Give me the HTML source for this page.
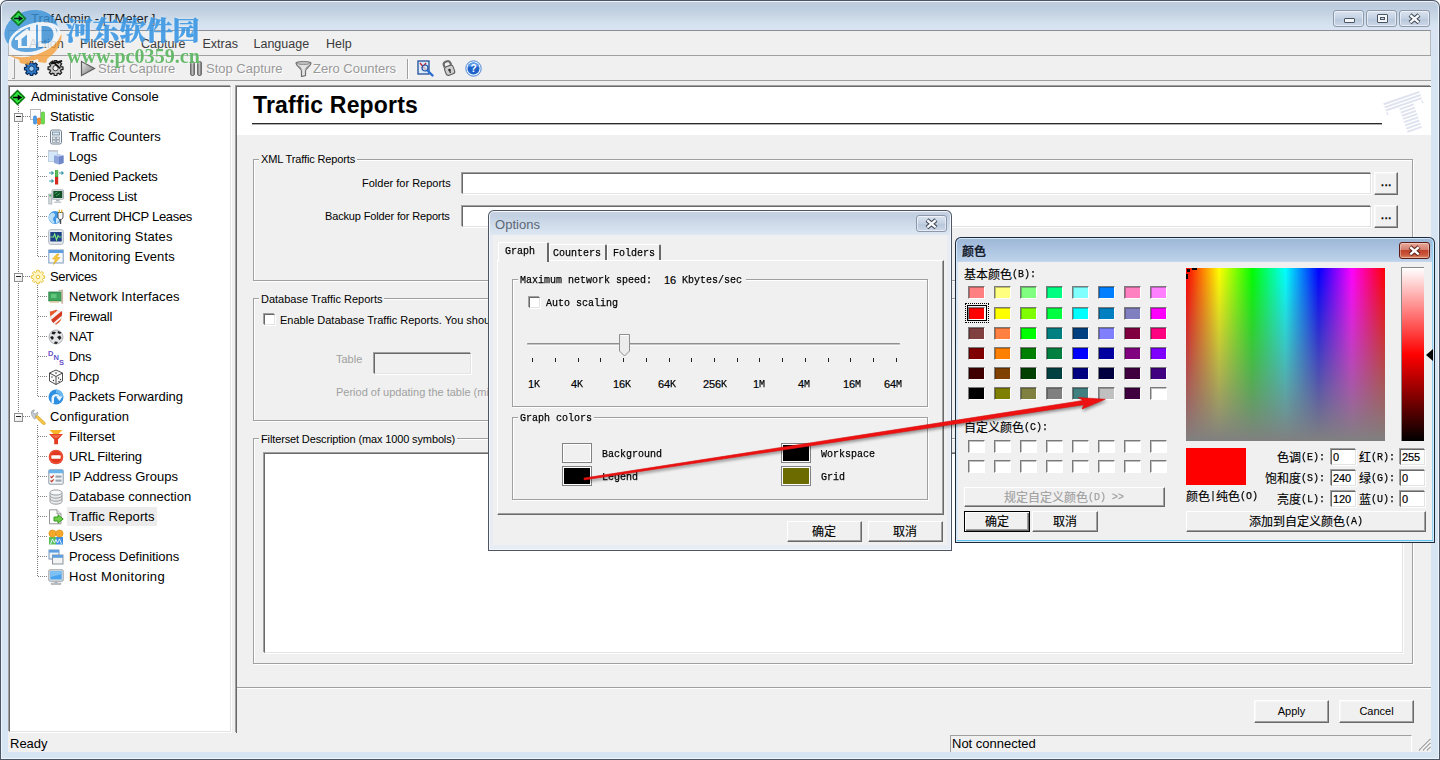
<!DOCTYPE html>
<html><head><meta charset="utf-8"><title>TrafAdmin</title>
<style>
*{box-sizing:border-box;margin:0;padding:0}
html,body{width:1440px;height:760px;overflow:hidden;background:#fff}
body{font-family:"Liberation Sans",sans-serif;font-size:12px;color:#000;position:relative}
div,span,b,i,svg{position:absolute}
span,b{white-space:pre}
#win{left:0;top:0;width:1440px;height:760px;background:linear-gradient(#c3ccd9 0,#bccde0 7px,#c8d5e4 15px,#d3e1ee 23px,#d9e3f3 29px,#d7e4f2 60px,#d7e4f2 100%);border-radius:7px 7px 0 0;box-shadow:inset 0 0 0 1px #4b5566,inset 0 0 0 2px #eef4fb}
#title{left:31px;top:11px;font-size:13px;color:#1a1a1a;letter-spacing:.07px}
#menubar{left:8px;top:30px;width:1423px;height:25px;background:#f0f0f0;border-top:1px solid #8c8f94;border-left:1px solid #b5b8bd;border-right:1px solid #b5b8bd}
#menubar span{top:6px;font-size:12.500px;color:#3a3a3a}
#toolbar{left:8px;top:55px;width:1423px;height:26px;background:#f0f0f0;border-top:1px solid #a0a0a0;border-bottom:1px solid #a0a0a0}
#toolbar .t{top:5px;font-size:13px;color:#999;text-shadow:1px 1px 0 #fff}
#client{left:8px;top:81px;width:1423px;height:671px;background:#f0f0f0}
#tree{left:9px;top:86px;width:222px;height:646px;background:#fff;border:1px solid #e3e3e3;border-top:1px solid #696969;border-left:1px solid #696969;box-shadow:-1px -1px 0 #a0a0a0,1px 1px 0 #fff}
.ti{height:20px;font-size:13px;line-height:22px;color:#000}
#main{left:236px;top:86px;width:1195px;height:647px;background:#f0f0f0;border-top:1px solid #696969;border-left:1px solid #696969;box-shadow:-1px -1px 0 #a0a0a0}
#hdr{left:237px;top:87px;width:1194px;height:48px;background:#fff}
#h1{left:253px;top:92px;font-size:23px;font-weight:bold;line-height:26px;letter-spacing:.18px}
#ul{left:252px;top:123px;width:1130px;height:2px;background:linear-gradient(#2a2a2a 0,#2a2a2a 1px,#b0b0b0 1px,#b0b0b0 2px)}
.gb{border:1px solid #a0a0a0;box-shadow:inset 1px 1px 0 #fff,1px 1px 0 #fff}
.gl{background:#f0f0f0;padding:0 2px;font-size:11px;line-height:14px}
.lbl{font-size:11px;line-height:14px}
.inp{background:#fff;border:1px solid #e3e3e3;border-top:1px solid #696969;border-left:1px solid #696969;box-shadow:-1px -1px 0 #a0a0a0,1px 1px 0 #fff}
.btn{background:#f0f0f0;border:1px solid;border-color:#fff #696969 #696969 #fff;box-shadow:inset -1px -1px 0 #a0a0a0,inset 1px 1px 0 #f7f7f7;text-align:center;font-size:11px}
.btn span{left:0;right:0;text-align:center}
#status{left:8px;top:733px;width:1423px;height:19px;background:#f0f0f0;font-size:13px}
.cb{width:11px;height:11px;background:#fff;border:1px solid #e3e3e3;border-top:1px solid #696969;border-left:1px solid #696969;box-shadow:-1px -1px 0 #a0a0a0,1px 1px 0 #fff}

.cj{font-family:"Liberation Mono","Noto Sans CJK SC",sans-serif;font-size:12px;line-height:12px;-webkit-text-stroke:.15px currentColor}
.mo{font-family:"Liberation Mono",monospace;font-size:11.500px;line-height:12px;-webkit-text-stroke:.25px currentColor;transform:scaleX(.8696);transform-origin:0 0}
.dg{font-family:"Liberation Sans",sans-serif;font-size:11px;line-height:12px;letter-spacing:-.12px;-webkit-text-stroke:.2px currentColor}
.dlg{border-radius:6px 6px 0 0;background:linear-gradient(#c9d3e1 0,#c2d0e2 6px,#d0dcea 15px,#dce6f3 24px,#e8edf5 26px);box-shadow:inset 0 0 0 1px #4e5663,inset 0 0 0 2px #f2f6fb}
.dlg.act{background:linear-gradient(#9ab5d6 0,#a9c1df 10px,#bdd2ea 24px,#d9e7f5 26px,#dcecf9 100%);box-shadow:inset 0 0 0 1px #1d2a3a,inset 0 0 0 2px #d4e6f7,inset 0 -3px 0 0 #5cc3ee,inset -3px 0 0 0 #8fd2f2}
.dlgbody{background:#f0f0f0}
.capbtn{border:1px solid #8d99aa;border-radius:3px;background:linear-gradient(#dbe4f0,#c3d0e2 50%,#b7c6db 51%,#cbd7e7);box-shadow:inset 0 0 0 1px rgba(255,255,255,.55)}
.capbtn.red{border-color:#5a1c14;background:linear-gradient(#e9a99b,#d4806f 45%,#c1422a 50%,#c95a3c 80%,#e08c6a);box-shadow:inset 0 0 0 1px rgba(255,255,255,.35)}
.pane{background:#f0f0f0;border:1px solid;border-color:#fff #696969 #696969 #fff;box-shadow:inset -1px -1px 0 #a0a0a0}
.tab{background:#f0f0f0;border-top:1px solid #fff;border-left:1px solid #fff;border-right:2px solid #696969;border-radius:2px 2px 0 0}
.tab.act{border-right:2px solid #696969}
.btn2{background:#f0f0f0;border:1px solid;border-color:#fff #696969 #696969 #fff;box-shadow:inset -1px -1px 0 #a0a0a0}
.btn2.def{border:1px solid #000;box-shadow:inset 1px 1px 0 #fff,inset -1px -1px 0 #696969,inset -2px -2px 0 #a0a0a0}
.sw{width:30px;height:20px;border:1px solid #828282;box-shadow:inset 0 0 0 1px #fff}
.cs{width:17px;height:13px;border:1px solid;border-color:#7a7a7a #fff #fff #7a7a7a;box-shadow:inset 1px 1px 0 rgba(0,0,0,.25)}
.inp2{background:#fff;border:1px solid #e3e3e3;border-top:1px solid #696969;border-left:1px solid #696969;box-shadow:-1px -1px 0 #a0a0a0,1px 1px 0 #fff}
</style></head><body>
<div id="win"></div>
<span id="title">TrafAdmin - [TMeter ]</span>
<div id="menubar"><span style="left:20px">Action</span><span style="left:71px">Filterset</span><span style="left:132px">Capture</span><span style="left:193.500px">Extras</span><span style="left:244.500px">Language</span><span style="left:317px">Help</span></div>
<div id="toolbar"><span class="t" style="left:90px">Start Capture</span><span class="t" style="left:198px">Stop Capture</span><span class="t" style="left:305px">Zero Counters</span></div>
<div id="client"></div>
<div id="tree"></div>
<!--TREE-->
<div style="left:18px;top:105px;width:1px;height:312px;background-image:linear-gradient(to bottom,#808080 1px,transparent 1px);background-size:1px 2px"></div>
<div style="left:37px;top:125px;width:1px;height:132px;background-image:linear-gradient(to bottom,#808080 1px,transparent 1px);background-size:1px 2px"></div>
<div style="left:37px;top:285px;width:1px;height:112px;background-image:linear-gradient(to bottom,#808080 1px,transparent 1px);background-size:1px 2px"></div>
<div style="left:37px;top:425px;width:1px;height:152px;background-image:linear-gradient(to bottom,#808080 1px,transparent 1px);background-size:1px 2px"></div>
<svg style="left:9px;top:88.5px" width="17" height="17" viewBox="0 0 16 16"><path d="M8 .5 15.5 8 8 15.5 .5 8Z" fill="#0b7a12"/><path d="M8 2.2 13.8 8 8 13.8 2.2 8Z" fill="#2ee53a" stroke="#064d0a" stroke-width=".8" stroke-dasharray="1.2 .8"/><path d="M3.8 7.2h4.4V5.2L12.4 8 8.2 10.8V8.8H3.8Z" fill="#000"/></svg>
<span class="ti" style="left:31px;top:86px;letter-spacing:-0.05px">Administative Console</span>
<div style="left:23px;top:116px;width:7px;height:1px;background-image:linear-gradient(to right,#808080 1px,transparent 1px);background-size:2px 1px"></div>
<div style="left:14px;top:112.5px;width:9px;height:9px;border:1px solid #919191;background:linear-gradient(135deg,#fff,#e8e8e8)"></div><div style="left:16px;top:116px;width:5px;height:1px;background:#222"></div>
<svg style="left:30px;top:109px" width="16" height="16" viewBox="0 0 16 16"><rect x=".5" y=".5" width="10" height="10" fill="#fdfdfd" stroke="#b9b9b9"/><rect x="3.5" y="7" width="3" height="8" rx="1" fill="#4a9be8" stroke="#2f7fd0" stroke-width=".6"/><rect x="7.5" y="9" width="3" height="6.5" rx="1" fill="#f08a2e" stroke="#d86c12" stroke-width=".6"/><rect x="11.3" y="3" width="3.2" height="12" rx="1" fill="#6fdc4a" stroke="#48b626" stroke-width=".6"/></svg>
<span class="ti" style="left:50px;top:106px;letter-spacing:-0.15px">Statistic</span>
<div style="left:38px;top:136px;width:10px;height:1px;background-image:linear-gradient(to right,#808080 1px,transparent 1px);background-size:2px 1px"></div>
<svg style="left:48px;top:129px" width="16" height="16" viewBox="0 0 16 16"><rect x="2.5" y="1" width="11" height="14" rx="1.8" fill="#f4f7fa" stroke="#71808f"/><rect x="4.5" y="3" width="7" height="3" fill="#cfe6f7" stroke="#71808f" stroke-width=".8"/><rect x="4.5" y="8" width="3" height="2.4" fill="#e4e9ee" stroke="#8795a3" stroke-width=".7"/><rect x="8.5" y="8" width="3" height="2.4" fill="#e4e9ee" stroke="#8795a3" stroke-width=".7"/><rect x="4.5" y="11" width="3" height="2.4" fill="#e4e9ee" stroke="#8795a3" stroke-width=".7"/><rect x="8.5" y="11" width="3" height="2.4" fill="#e4e9ee" stroke="#8795a3" stroke-width=".7"/></svg>
<span class="ti" style="left:69px;top:126px">Traffic Counters</span>
<div style="left:38px;top:156px;width:10px;height:1px;background-image:linear-gradient(to right,#808080 1px,transparent 1px);background-size:2px 1px"></div>
<svg style="left:48px;top:149px" width="16" height="16" viewBox="0 0 16 16"><rect x=".5" y="1.5" width="9" height="11" fill="#d3e8f8" stroke="#b8c9d9" stroke-width=".8"/><rect x=".5" y="1.2" width="9" height="1.6" fill="#c5c8d2"/><path d="M6 6.5l5 -1.2 4.5 1.2v7.5l-4.5 1.5-5-1.5Z" fill="#8ea6dc"/><path d="M11 7v8.5l4.5-1.5V6.5Z" fill="#6f86c8"/><path d="M6 6.5l5-1.2 4.5 1.2-4.5 1Z" fill="#c5d4f2"/></svg>
<span class="ti" style="left:69px;top:146px">Logs</span>
<div style="left:38px;top:176px;width:10px;height:1px;background-image:linear-gradient(to right,#808080 1px,transparent 1px);background-size:2px 1px"></div>
<svg style="left:48px;top:169px" width="16" height="16" viewBox="0 0 16 16"><rect x="7" y="1" width="3.2" height="7" fill="#3faa3c"/><rect x="7" y="8" width="3.2" height="7.5" fill="#d42a22"/><path d="M7.6 2h2M7.6 4h2M7.6 6h2" stroke="#9be08f" stroke-width=".8"/><path d="M1 4h4M3.5 2.3 5.3 4 3.5 5.7M1 12h4M3.5 10.3 5.3 12 3.5 13.7M11 4h4M13.5 2.3 15.3 4 13.5 5.7" fill="none" stroke="#3a98a8" stroke-width="1.1"/></svg>
<span class="ti" style="left:69px;top:166px;letter-spacing:-0.17px">Denied Packets</span>
<div style="left:38px;top:196px;width:10px;height:1px;background-image:linear-gradient(to right,#808080 1px,transparent 1px);background-size:2px 1px"></div>
<svg style="left:48px;top:189px" width="16" height="16" viewBox="0 0 16 16"><rect x="4" y=".8" width="11.5" height="9.5" rx="1" fill="#dfe3e6" stroke="#9aa3aa" stroke-width=".8"/><rect x="5.3" y="2" width="9" height="7" fill="#14502a"/><path d="M6.5 4.5l3-1.5M8 7l4-2.5" stroke="#3fc16a" stroke-width=".8"/><rect x="8" y="10.5" width="3.5" height="2" fill="#b0b7bd"/><rect x="6" y="12.5" width="7.5" height="1.5" fill="#c9ced2"/><rect x=".8" y="5" width="3" height="10" fill="#d7dcdf" stroke="#9aa3aa" stroke-width=".7"/><rect x="1.4" y="6" width="1.8" height="1.4" fill="#36b34a"/></svg>
<span class="ti" style="left:69px;top:186px;letter-spacing:-0.25px">Process List</span>
<div style="left:38px;top:216px;width:10px;height:1px;background-image:linear-gradient(to right,#808080 1px,transparent 1px);background-size:2px 1px"></div>
<svg style="left:48px;top:209px" width="16" height="16" viewBox="0 0 16 16"><circle cx="7" cy="8.5" r="6.5" fill="#3f97e6"/><path d="M3 4.5c2-1 4-.5 4 1.5s-2 2-2 4 2 2 1.5 4.5C3 14 .8 11 .8 8.500c0-1.500.8-3 2.200-4Z" fill="#b9dcf7"/><path d="M8 9.500c1.500-1 3.500 0 3 2s-2 2.500-3 3Z" fill="#c9e6fb"/><path d="M10 3.500h5v4.500c0 1.500-1 2.500-2.500 2.500S10 9.500 10 8Z" fill="#fafafa" stroke="#4a4a4a" stroke-width=".9"/><path d="M11.300.8v3M13.700.8v3" stroke="#e3b723" stroke-width="1.300"/><path d="M12.500 10.500v4.500" stroke="#4a4a4a" stroke-width="1.400"/></svg>
<span class="ti" style="left:69px;top:206px;letter-spacing:-0.32px">Current DHCP Leases</span>
<div style="left:38px;top:236px;width:10px;height:1px;background-image:linear-gradient(to right,#808080 1px,transparent 1px);background-size:2px 1px"></div>
<svg style="left:48px;top:229px" width="16" height="16" viewBox="0 0 16 16"><rect x=".7" y=".7" width="14.600" height="14.600" rx="2" fill="#e8ecf0" stroke="#aab4be"/><rect x="2.300" y="3" width="11.400" height="9.500" fill="#1f3f86"/><path d="M2.500 8h3l1.200-3 1.800 6 1.500-4.500 1 1.500h2.500" fill="none" stroke="#7dea7a" stroke-width="1.100"/></svg>
<span class="ti" style="left:69px;top:226px;letter-spacing:0.14px">Monitoring States</span>
<div style="left:38px;top:256px;width:10px;height:1px;background-image:linear-gradient(to right,#808080 1px,transparent 1px);background-size:2px 1px"></div>
<svg style="left:48px;top:249px" width="16" height="16" viewBox="0 0 16 16"><rect x=".8" y="1" width="14.400" height="13" fill="#f6f8fa" stroke="#7f9dc0"/><rect x=".8" y="1" width="14.400" height="3" fill="#5c9de0"/><path d="M9 5 4.500 10h3L5.500 15.500 12 8.500H8.500L11 5Z" fill="#f6c83a" stroke="#e0a818" stroke-width=".6"/></svg>
<span class="ti" style="left:69px;top:246px;letter-spacing:0.1px">Monitoring Events</span>
<div style="left:23px;top:276px;width:7px;height:1px;background-image:linear-gradient(to right,#808080 1px,transparent 1px);background-size:2px 1px"></div>
<div style="left:14px;top:272.5px;width:9px;height:9px;border:1px solid #919191;background:linear-gradient(135deg,#fff,#e8e8e8)"></div><div style="left:16px;top:276px;width:5px;height:1px;background:#222"></div>
<svg style="left:30px;top:269px" width="16" height="16" viewBox="0 0 16 16"><g transform="translate(1.200 .6) scale(.85)"><path d="M6.700.8h2.600l.4 2 1.300.6 1.700-1.200 1.800 1.800L13.300 5.700l.6 1.300 2 .4v2.600l-2 .4-.6 1.300 1.200 1.700-1.800 1.800-1.700-1.200-1.300.6-.4 2H6.700l-.4-2L5 14l-1.700 1.200-1.800-1.800L2.700 11.700 2.100 10.400.1 10V7.400l2-.4.6-1.300L1.500 4 3.300 2.200 5 3.400l1.300-.6Z" fill="#fff6c4" stroke="#e6b822" stroke-width="1"/><circle cx="8" cy="8.700" r="2" fill="#fff" stroke="#e6b822"/></g></svg>
<span class="ti" style="left:50px;top:266px;letter-spacing:-0.37px">Services</span>
<div style="left:38px;top:296px;width:10px;height:1px;background-image:linear-gradient(to right,#808080 1px,transparent 1px);background-size:2px 1px"></div>
<svg style="left:48px;top:289px" width="16" height="16" viewBox="0 0 16 16"><rect x=".8" y="3" width="12.500" height="9" fill="#3ea55c" stroke="#2a7c43" stroke-width=".8"/><rect x="3" y="5" width="5.500" height="4" fill="#5fc77c"/><rect x="13.300" y=".8" width="1.800" height="14" fill="#c9b9a6"/><rect x="2" y="12" width="9" height="1.800" fill="#d8c9a2"/><rect x="10.500" y=".8" width="4.500" height="1.200" fill="#c9b9a6"/></svg>
<span class="ti" style="left:69px;top:286px;letter-spacing:0.13px">Network Interfaces</span>
<div style="left:38px;top:316px;width:10px;height:1px;background-image:linear-gradient(to right,#808080 1px,transparent 1px);background-size:2px 1px"></div>
<svg style="left:48px;top:309px" width="16" height="16" viewBox="0 0 16 16"><path d="M2 2.500C5 2.500 6.500 1.500 8 .8c1.500.7 3 1.700 6 1.700 0 6-1.500 10.500-6 13C3.500 13 2 8.500 2 2.500Z" fill="#f4f4f4" stroke="#c9c9c9" stroke-width=".6"/><path d="M2 2.500C5 2.500 6.500 1.500 8 .8L9.500 1.500 2.300 7.500C2.100 6 2 4.300 2 2.500Z" fill="#e8572a"/><path d="M13.200 2.400 3.200 10.800c.5 1.200 1.200 2.300 2.100 3.200L14 6.500c.1-1.300 0-2.700 0-4Z" fill="#d63b22"/><path d="M13.500 9.500 7 15c.3.200.6.400 1 .5 3-1.500 4.700-3.500 5.500-6Z" fill="#e8572a"/></svg>
<span class="ti" style="left:69px;top:306px;letter-spacing:-0.2px">Firewall</span>
<div style="left:38px;top:336px;width:10px;height:1px;background-image:linear-gradient(to right,#808080 1px,transparent 1px);background-size:2px 1px"></div>
<svg style="left:48px;top:329px" width="16" height="16" viewBox="0 0 16 16"><circle cx="8" cy="8" r="7" fill="#e2e4e6" stroke="#9ba2a8" stroke-width=".8"/><path d="M4.500 2.500 8 3 6.500 5.500 3.500 5ZM10 2l3.500 1.500L12 5 9.500 4ZM2 8l2.500-1L6 9 4 11ZM9 8l3-1.500 1.500 2.500-2 2ZM7 12.500l3 .5-1.500 2-2.500-.5Z" fill="#1c1c1c"/></svg>
<span class="ti" style="left:69px;top:326px">NAT</span>
<div style="left:38px;top:356px;width:10px;height:1px;background-image:linear-gradient(to right,#808080 1px,transparent 1px);background-size:2px 1px"></div>
<svg style="left:48px;top:349px" width="16" height="16" viewBox="0 0 16 16"><text x="0" y="6.500" font-family="Liberation Sans,sans-serif" font-size="7.500" font-weight="bold" fill="#6a50c8">D</text><text x="5.500" y="11" font-family="Liberation Sans,sans-serif" font-size="7.500" font-weight="bold" fill="#5a5ad0">N</text><text x="11" y="15.500" font-family="Liberation Sans,sans-serif" font-size="7.500" font-weight="bold" fill="#6a50c8">S</text></svg>
<span class="ti" style="left:69px;top:346px;letter-spacing:-0.3px">Dns</span>
<div style="left:38px;top:376px;width:10px;height:1px;background-image:linear-gradient(to right,#808080 1px,transparent 1px);background-size:2px 1px"></div>
<svg style="left:48px;top:369px" width="16" height="16" viewBox="0 0 16 16"><path d="M8 1 14.500 4v8L8 15.500 1.500 12V4Z" fill="#fafafa" stroke="#4c4c4c" stroke-width="1"/><path d="M1.500 4 8 7.500 14.500 4M8 7.500V15.500" fill="none" stroke="#4c4c4c" stroke-width="1"/><circle cx="8" cy="4" r=".8" fill="#333"/><circle cx="4" cy="8" r=".7" fill="#333"/><circle cx="5.500" cy="11.500" r=".7" fill="#333"/><circle cx="10.500" cy="9" r=".7" fill="#333"/><circle cx="12.500" cy="10.500" r=".7" fill="#333"/><circle cx="11" cy="12.500" r=".7" fill="#333"/></svg>
<span class="ti" style="left:69px;top:366px">Dhcp</span>
<div style="left:38px;top:396px;width:10px;height:1px;background-image:linear-gradient(to right,#808080 1px,transparent 1px);background-size:2px 1px"></div>
<svg style="left:48px;top:389px" width="16" height="16" viewBox="0 0 16 16"><circle cx="8" cy="8" r="7.500" fill="#2f8fe0"/><path d="M8 .5A7.500 7.500 0 0 1 15.500 8L12 8A4 4 0 0 0 8 4Z" fill="#6bb8f2"/><path d="M3.500 9.500A4.500 4.500 0 0 1 12 7.500h2.500L11.500 12 8 7.500h2A2.500 2.500 0 0 0 6 9.500v5H3.500Z" fill="#eaf5ff"/></svg>
<span class="ti" style="left:69px;top:386px;letter-spacing:-0.06px">Packets Forwarding</span>
<div style="left:23px;top:416px;width:7px;height:1px;background-image:linear-gradient(to right,#808080 1px,transparent 1px);background-size:2px 1px"></div>
<div style="left:14px;top:412.5px;width:9px;height:9px;border:1px solid #919191;background:linear-gradient(135deg,#fff,#e8e8e8)"></div><div style="left:16px;top:416px;width:5px;height:1px;background:#222"></div>
<svg style="left:30px;top:409px" width="16" height="16" viewBox="0 0 16 16"><path d="M1.500 4.500C1 2.500 2.500 .8 4.500 1L3 3l1 1.800 2 .2L7.500 3c.8 1.800-.5 4-2.500 4L6.500 8.500 4.500 10 3 8C2 7 1.700 6 1.500 4.500Z" fill="#c9ced2" stroke="#8a949c" stroke-width=".7"/><path d="M5.500 8 7.500 6.500 15 13.500c.6.700.3 1.700-.5 2s-1.500 0-2-.5Z" fill="#f5c546" stroke="#d49a1c" stroke-width=".7"/></svg>
<span class="ti" style="left:50px;top:406px;letter-spacing:0.14px">Configuration</span>
<div style="left:38px;top:436px;width:10px;height:1px;background-image:linear-gradient(to right,#808080 1px,transparent 1px);background-size:2px 1px"></div>
<svg style="left:48px;top:429px" width="16" height="16" viewBox="0 0 16 16"><path d="M1.500 1h13L10 5.500H6Z" fill="#f8b52a"/><path d="M1 5h14l-5 5.500v4.700H6.200V10.500Z" fill="#e23c22"/><path d="M3.500 6h9L9.500 9H6.500Z" fill="#f2694a"/></svg>
<span class="ti" style="left:69px;top:426px">Filterset</span>
<div style="left:38px;top:456px;width:10px;height:1px;background-image:linear-gradient(to right,#808080 1px,transparent 1px);background-size:2px 1px"></div>
<svg style="left:48px;top:449px" width="16" height="16" viewBox="0 0 16 16"><circle cx="8" cy="8" r="7.300" fill="#e2371f"/><circle cx="8" cy="8" r="6.300" fill="none" stroke="#f26a4e" stroke-width=".8"/><rect x="3.300" y="6.300" width="9.400" height="3.400" rx=".6" fill="#fff"/></svg>
<span class="ti" style="left:69px;top:446px;letter-spacing:-0.2px">URL Filtering</span>
<div style="left:38px;top:476px;width:10px;height:1px;background-image:linear-gradient(to right,#808080 1px,transparent 1px);background-size:2px 1px"></div>
<svg style="left:48px;top:469px" width="16" height="16" viewBox="0 0 16 16"><rect x=".8" y=".8" width="14.400" height="14.400" rx="1" fill="#f4f6f8" stroke="#8c99a6"/><rect x=".8" y=".8" width="14.400" height="3.400" fill="#67b3ea"/><path d="M2.500 7.500l1.200 1.200 2-2.400M2.500 11.500l1.200 1.200 2-2.400" fill="none" stroke="#c0392b" stroke-width="1.200"/><rect x="7.500" y="6.500" width="6" height="2.200" fill="#9aa5b0"/><rect x="7.500" y="10.500" width="6" height="2.200" fill="#9aa5b0"/></svg>
<span class="ti" style="left:69px;top:466px">IP Address Groups</span>
<div style="left:38px;top:496px;width:10px;height:1px;background-image:linear-gradient(to right,#808080 1px,transparent 1px);background-size:2px 1px"></div>
<svg style="left:48px;top:489px" width="16" height="16" viewBox="0 0 16 16"><path d="M2 3.500v9c0 1.500 2.700 2.700 6 2.700s6-1.200 6-2.700v-9Z" fill="#e9ebec" stroke="#8f9499" stroke-width=".9"/><ellipse cx="8" cy="3.500" rx="6" ry="2.600" fill="#f6f7f8" stroke="#8f9499" stroke-width=".9"/><path d="M2 6.500c0 1.500 2.700 2.700 6 2.700s6-1.200 6-2.700M2 9.500c0 1.500 2.700 2.700 6 2.700s6-1.200 6-2.700" fill="none" stroke="#8f9499" stroke-width=".9"/></svg>
<span class="ti" style="left:69px;top:486px">Database connection</span>
<div style="left:38px;top:516px;width:10px;height:1px;background-image:linear-gradient(to right,#808080 1px,transparent 1px);background-size:2px 1px"></div>
<svg style="left:48px;top:509px" width="16" height="16" viewBox="0 0 16 16"><path d="M1.500.8h7.500l4 4v10H1.500Z" fill="#fdfdfd" stroke="#8a8a8a" stroke-width=".9"/><path d="M9 .8v4h4" fill="#e4e4e4" stroke="#8a8a8a" stroke-width=".8"/><path d="M6 8h4V5.800l5.200 4.200L10 14.200V12H6Z" fill="#6fd14a" stroke="#2f8f1a" stroke-width=".9"/></svg>
<div style="left:67px;top:507px;width:90px;height:19px;background:#ececec"></div>
<span class="ti" style="left:69px;top:506px;letter-spacing:0.07px">Traffic Reports</span>
<div style="left:38px;top:536px;width:10px;height:1px;background-image:linear-gradient(to right,#808080 1px,transparent 1px);background-size:2px 1px"></div>
<svg style="left:48px;top:529px" width="16" height="16" viewBox="0 0 16 16"><rect x="1" y="8" width="7" height="7.500" fill="#5dc15a"/><rect x="8" y="8" width="7" height="7.500" fill="#3f8fe2"/><path d="M2.500 15l2-5 2 4 1.500-3.500L9.500 14l2-4 2 5" fill="none" stroke="#d9f0ff" stroke-width="1"/><circle cx="4.500" cy="4.500" r="3.600" fill="#f6a928" stroke="#e08a12" stroke-width=".6"/><circle cx="11.500" cy="4.500" r="3.600" fill="#f6a928" stroke="#e08a12" stroke-width=".6"/></svg>
<span class="ti" style="left:69px;top:526px;letter-spacing:-0.2px">Users</span>
<div style="left:38px;top:556px;width:10px;height:1px;background-image:linear-gradient(to right,#808080 1px,transparent 1px);background-size:2px 1px"></div>
<svg style="left:48px;top:549px" width="16" height="16" viewBox="0 0 16 16"><rect x="1" y="1" width="10" height="9" fill="#eef4fa" stroke="#6f8db0" stroke-width=".9"/><rect x="1" y="1" width="10" height="2.600" fill="#5d9fe0"/><rect x="4.500" y="6" width="10.500" height="9" fill="#f3f3f3" stroke="#7f8a96" stroke-width=".9"/><rect x="4.500" y="6" width="10.500" height="2.800" fill="#5d9fe0"/></svg>
<span class="ti" style="left:69px;top:546px;letter-spacing:-0.06px">Process Definitions</span>
<div style="left:38px;top:576px;width:10px;height:1px;background-image:linear-gradient(to right,#808080 1px,transparent 1px);background-size:2px 1px"></div>
<svg style="left:48px;top:569px" width="16" height="16" viewBox="0 0 16 16"><rect x=".8" y=".8" width="14.400" height="11.400" rx="1" fill="#e1e5e8" stroke="#8e979f" stroke-width=".9"/><rect x="2.300" y="2.300" width="11.400" height="8.200" fill="#4aa3ec"/><path d="M2.300 2.300h11.400v3L2.300 8Z" fill="#7cc0f5"/><rect x="6.500" y="12.200" width="3" height="1.800" fill="#aeb5bb"/><rect x="3" y="14" width="10" height="1.500" rx=".5" fill="#c3c9ce" stroke="#8e979f" stroke-width=".5"/></svg>
<span class="ti" style="left:69px;top:566px;letter-spacing:0.33px">Host Monitoring</span>
<div id="main"></div>
<div id="hdr"></div>
<span id="h1">Traffic Reports</span><div id="ul"></div>
<!--MAINFORM-->
<div class="gb" style="left:253px;top:159px;width:1160px;height:122px"></div>
<span class="gl" style="left:259px;top:152px;letter-spacing:-.13px">XML Traffic Reports</span>
<span class="lbl" style="left:362px;top:176px">Folder for Reports</span>
<div class="inp" style="left:462px;top:173px;width:909px;height:21px"></div>
<div class="btn" style="left:1374px;top:172px;width:24px;height:23px"><span style="top:0;font-size:14px;line-height:16px;letter-spacing:-.3px;-webkit-text-stroke:.3px #000">...</span></div>
<span class="lbl" style="left:325px;top:209px;letter-spacing:-.15px">Backup Folder for Reports</span>
<div class="inp" style="left:462px;top:206px;width:909px;height:21px"></div>
<div class="btn" style="left:1374px;top:205px;width:24px;height:23px"><span style="top:0;font-size:14px;line-height:16px;letter-spacing:-.3px;-webkit-text-stroke:.3px #000">...</span></div>
<div class="gb" style="left:253px;top:298px;width:1160px;height:123px"></div>
<span class="gl" style="left:259px;top:292px">Database Traffic Reports</span>
<div class="cb" style="left:264px;top:314px"></div>
<span class="lbl" style="left:280px;top:313px">Enable Database Traffic Reports. You should</span>
<span class="lbl" style="left:336px;top:352px;color:#a0a0a0">Table</span>
<div class="inp" style="left:374px;top:353px;width:97px;height:21px;background:#f0f0f0"></div>
<span class="lbl" style="left:336px;top:385px;color:#a0a0a0">Period of updating the table (minutes)</span>
<div class="gb" style="left:253px;top:438px;width:1160px;height:226px"></div>
<span class="gl" style="left:259px;top:432px;letter-spacing:-.13px">Filterset Description (max 1000 symbols)</span>
<div class="inp" style="left:264px;top:453px;width:1139px;height:200px"></div>
<div style="left:237px;top:687px;width:1194px;height:2px;background:#a0a0a0;border-bottom:1px solid #fff"></div>
<div class="btn" style="left:1254px;top:700px;width:75px;height:23px"><span style="top:4px">Apply</span></div>
<div class="btn" style="left:1339px;top:700px;width:75px;height:23px"><span style="top:4px">Cancel</span></div>
<!--CHROME-->
<svg style="left:10px;top:10px" width="17" height="17" viewBox="0 0 16 16"><path d="M8 .5 15.5 8 8 15.5 .5 8Z" fill="#0b7a12"/><path d="M8 2.2 13.8 8 8 13.8 2.2 8Z" fill="#2ee53a" stroke="#064d0a" stroke-width=".8" stroke-dasharray="1.2 .8"/><path d="M3.8 7.2h4.4V5.2L12.4 8 8.2 10.8V8.8H3.8Z" fill="#000"/></svg>
<div class="capbtn" style="left:1333px;top:10px;width:31px;height:17px"><div style="left:10px;top:7px;width:11px;height:5px;background:#f4f6fa;border:1px solid #4a5563;border-radius:1px"></div></div>
<div class="capbtn" style="left:1366px;top:10px;width:31px;height:17px"><div style="left:10px;top:3px;width:11px;height:9px;border:1px solid #4a5563;background:#f4f6fa;border-radius:1px"></div><div style="left:13px;top:6px;width:5px;height:3px;border:1px solid #4a5563;background:#cfdae8"></div></div>
<div class="capbtn" style="left:1399px;top:10px;width:31px;height:17px"><svg style="left:8px;top:2px" width="13" height="12" viewBox="0 0 13 12"><path d="M2 2 11 9.600M11 2 2 9.600" stroke="#3a4350" stroke-width="4.400"/><path d="M2.300 2.250 10.700 9.350M10.700 2.250 2.300 9.350" stroke="#f7f9fc" stroke-width="2.300"/></svg></div>
<div style="left:12px;top:58px;width:3px;height:21px;border:1px solid #fff;border-right-color:#a0a0a0;border-bottom-color:#a0a0a0;border-left:none"></div>
<svg style="left:23px;top:61px" width="17" height="15" viewBox="0 0 16 17"><path d="M6.700.8h2.600l.4 2 1.300.6 1.700-1.200 1.800 1.800L13.300 5.700l.6 1.300 2 .4v2.600l-2 .4-.6 1.300 1.200 1.700-1.800 1.800-1.700-1.200-1.300.6-.4 2H6.700l-.4-2L5 14l-1.700 1.200-1.800-1.800L2.700 11.700 2.100 10.400.1 10V7.400l2-.4.6-1.300L1.500 4 3.300 2.200 5 3.400l1.300-.6Z" fill="#2a78c8" stroke="#0e2a55" stroke-width="1.400"/><circle cx="8" cy="8.700" r="3" fill="#9fd0f5" stroke="#0e2a55"/><path d="M7 2l1-2 1 2" fill="#e07b1a" stroke="#e07b1a" stroke-width=".8"/></svg>
<svg style="left:47px;top:60px" width="18" height="16" viewBox="0 0 17 17"><path d="M6.700.8h2.600l.4 2 1.300.6 1.700-1.200 1.800 1.800L13.300 5.700l.6 1.300 2 .4v2.600l-2 .4-.6 1.300 1.200 1.700-1.800 1.800-1.700-1.200-1.300.6-.4 2H6.700l-.4-2L5 14l-1.700 1.200-1.800-1.800L2.700 11.700 2.100 10.400.1 10V7.400l2-.4.6-1.300L1.500 4 3.300 2.200 5 3.400l1.300-.6Z" fill="#c9c9c9" stroke="#222" stroke-width="1.400"/><circle cx="8" cy="8.700" r="2.800" fill="#f4f4f4" stroke="#333"/><path d="M3 4 15 1M4 1 13 9" stroke="#111" stroke-width="1.800"/></svg>
<div style="left:70px;top:59px;width:2px;height:20px;border-left:1px solid #a0a0a0;border-right:1px solid #fff"></div>
<svg style="left:80px;top:60px" width="16" height="17" viewBox="0 0 16 17"><defs><linearGradient id="pg" x1="0" y1="0" x2="1" y2="1"><stop offset="0" stop-color="#f0f0f0"/><stop offset="1" stop-color="#6a6a6a"/></linearGradient></defs><path d="M1.500 1.500 14.500 8.500 1.500 15.500Z" fill="url(#pg)" stroke="#5e5e5e" stroke-width="1.200"/></svg>
<div style="left:190px;top:61px;width:5px;height:15px;border-radius:2px;background:linear-gradient(90deg,#7a7a7a,#c4c4c4 45%,#707070);border:1px solid #6e6e6e"></div><div style="left:197px;top:61px;width:5px;height:15px;border-radius:2px;background:linear-gradient(90deg,#7a7a7a,#c4c4c4 45%,#707070);border:1px solid #6e6e6e"></div>
<svg style="left:295px;top:60px" width="17" height="17" viewBox="0 0 17 17"><path d="M1 3c0-1.500 15-1.500 15 0 0 3-5 5-5.500 8v4.500l-4 1V11C6 8 1 6 1 3Z" fill="#e4e4e4" stroke="#6e6e6e" stroke-width="1.200"/><ellipse cx="8.500" cy="3" rx="6.500" ry="1.600" fill="#bdbdbd" stroke="#777" stroke-width=".7"/><path d="M4 5.500l3 4M13 5.500l-3 4" stroke="#9a9a9a" stroke-width=".8"/></svg>
<div style="left:407px;top:59px;width:2px;height:20px;border-left:1px solid #a0a0a0;border-right:1px solid #fff"></div>
<svg style="left:417px;top:60px" width="17" height="17" viewBox="0 0 17 17"><rect x="1" y="1" width="11" height="13" fill="#dce9f8" stroke="#1f4f9a" stroke-width="1.300"/><path d="M3 3l6 7M9 3 5 8" stroke="#c0283a" stroke-width="1.300"/><circle cx="8" cy="8" r="3" fill="#cfe5fa" fill-opacity=".7" stroke="#1f4f9a" stroke-width="1.200"/><path d="M10.500 10.500 15.500 15.500" stroke="#2a6fd0" stroke-width="2.400" stroke-linecap="round"/></svg>
<svg style="left:441px;top:59px" width="16" height="18" viewBox="0 0 16 18"><path d="M3 7V5c0-4 7-4 7 0v2" fill="none" stroke="#6c6c6c" stroke-width="2.200" transform="rotate(-20 7 6)"/><rect x="4" y="7" width="9" height="9" rx="2.500" fill="#cfcfcf" stroke="#5e5e5e" stroke-width="1.100" transform="rotate(-20 8 11)"/><circle cx="8.500" cy="11" r="1.300" fill="#333"/><path d="M8.500 11l1 3" stroke="#333" stroke-width="1.200"/></svg>
<svg style="left:465px;top:60px" width="17" height="17" viewBox="0 0 17 17"><circle cx="8.500" cy="8.500" r="7.700" fill="#e9f2fc" stroke="#4a86d8" stroke-width="1"/><circle cx="8.500" cy="8.500" r="6" fill="#1f62c9"/><path d="M3 7a5.600 5.600 0 0 1 11 0c-3-1.500-8-1.500-11 0Z" fill="#5b9bea"/><text x="8.500" y="12.300" text-anchor="middle" font-family="Liberation Sans,sans-serif" font-weight="bold" font-size="10" fill="#fff">?</text></svg>
<svg style="left:1382px;top:90px" width="48" height="48" viewBox="0 0 48 48"><g transform="rotate(-19 24 24)" stroke="#dfe3ef" stroke-width="1.900"><path d="M6 7.5h38"/><path d="M6 10.8h38"/><path d="M6 14.1h38"/><path d="M19.500 17.5h15"/><path d="M19.500 20.9h15"/><path d="M19.500 24.3h15"/><path d="M19.500 27.7h15"/><path d="M19.500 31.1h15"/><path d="M19.500 34.5h15"/><path d="M19.500 37.9h15"/><path d="M19.500 41.3h15"/><path d="M6.500 16.500v2.500M43.500 16.500v2.500" stroke-width="1.500"/></g></svg>
<!--STATUS-->
<div id="status"><span style="left:2px;top:3px">Ready</span>
<div style="left:942px;top:2px;width:462px;height:17px;border-top:1px solid #a0a0a0;border-left:1px solid #a0a0a0;border-right:1px solid #fff"></div>
<span style="left:944px;top:3px">Not connected</span></div>
<svg style="left:1418px;top:738px" width="13" height="13" viewBox="0 0 13 13"><path d="M12.500 1 1 12.500M12.500 5 5 12.500M12.500 9 9 12.500" stroke="#9a9a9a" stroke-width="1.200"/><path d="M12.500 2.200 2.200 12.500M12.500 6.200 6.200 12.500M12.500 10.200 10.200 12.500" stroke="#fff" stroke-width="1"/></svg>
<!--OPTIONS-->
<div class="dlg" style="left:488px;top:210px;width:464px;height:341px"></div>
<div class="dlgbody" style="left:493px;top:235px;width:454px;height:310px"></div>
<span style="left:495px;top:216px;font-size:13px;color:#5c6775;line-height:17px;letter-spacing:.05px">Options</span>
<div class="capbtn" style="left:916px;top:215px;width:31px;height:17px"><svg style="left:8px;top:2px" width="13" height="12" viewBox="0 0 13 12"><path d="M2 2 11 9.600M11 2 2 9.600" stroke="#3a4350" stroke-width="4.400"/><path d="M2.300 2.250 10.700 9.350M10.700 2.250 2.300 9.350" stroke="#f7f9fc" stroke-width="2.300"/></svg></div>
<div class="pane" style="left:497px;top:260px;width:447px;height:255px"></div>
<div class="tab act" style="left:498px;top:242px;width:51px;height:20px"></div>
<div class="tab" style="left:549px;top:244px;width:58px;height:16px"></div>
<div class="tab" style="left:607px;top:244px;width:54px;height:16px"></div>
<span class="mo" style="left:505px;top:245px;color:#000;">Graph</span>
<span class="mo" style="left:553px;top:247px;color:#000;">Counters</span>
<span class="mo" style="left:613px;top:247px;color:#000;">Folders</span>
<div class="gb" style="left:512px;top:279px;width:416px;height:128px"></div>
<div style="left:518px;top:274px;width:228px;height:12px;background:#f0f0f0"></div>
<span class="mo" style="left:520px;top:274px;color:#000;">Maximum network speed:  </span><span class="dg" style="left:664px;top:274px;color:#000;">16</span><span class="mo" style="left:682px;top:274px;color:#000;">Kbytes/sec</span>
<div class="cb" style="left:529px;top:297px;width:11px;height:11px"></div>
<span class="mo" style="left:546px;top:297px;color:#000;">Auto scaling</span>
<div style="left:527px;top:343px;width:373px;height:3px;background:#c4c4c4;border-top:1px solid #8e8e8e;border-bottom:1px solid #fafafa;border-radius:1px"></div>
<svg style="left:619px;top:334px" width="11" height="23" viewBox="0 0 11 23"><path d="M.5.500h10v16.500L5.500 22 .5 17Z" fill="#ececec" stroke="#8e8f8f"/><path d="M1.500 1.500h8" stroke="#fff"/></svg>
<div style="left:532px;top:358px;width:1px;height:4px;background:#222"></div>
<div style="left:555px;top:358px;width:1px;height:4px;background:#222"></div>
<div style="left:578px;top:358px;width:1px;height:4px;background:#222"></div>
<div style="left:600px;top:358px;width:1px;height:4px;background:#222"></div>
<div style="left:623px;top:358px;width:1px;height:4px;background:#222"></div>
<div style="left:646px;top:358px;width:1px;height:4px;background:#222"></div>
<div style="left:669px;top:358px;width:1px;height:4px;background:#222"></div>
<div style="left:691px;top:358px;width:1px;height:4px;background:#222"></div>
<div style="left:714px;top:358px;width:1px;height:4px;background:#222"></div>
<div style="left:737px;top:358px;width:1px;height:4px;background:#222"></div>
<div style="left:759px;top:358px;width:1px;height:4px;background:#222"></div>
<div style="left:782px;top:358px;width:1px;height:4px;background:#222"></div>
<div style="left:805px;top:358px;width:1px;height:4px;background:#222"></div>
<div style="left:828px;top:358px;width:1px;height:4px;background:#222"></div>
<div style="left:850px;top:358px;width:1px;height:4px;background:#222"></div>
<div style="left:873px;top:358px;width:1px;height:4px;background:#222"></div>
<div style="left:896px;top:358px;width:1px;height:4px;background:#222"></div>
<span class="dg" style="left:528px;top:378px;color:#000;">1</span><span class="mo" style="left:534px;top:378px;color:#000;">K</span>
<span class="dg" style="left:571px;top:378px;color:#000;">4</span><span class="mo" style="left:577px;top:378px;color:#000;">K</span>
<span class="dg" style="left:613px;top:378px;color:#000;">16</span><span class="mo" style="left:625px;top:378px;color:#000;">K</span>
<span class="dg" style="left:658px;top:378px;color:#000;">64</span><span class="mo" style="left:670px;top:378px;color:#000;">K</span>
<span class="dg" style="left:703px;top:378px;color:#000;">256</span><span class="mo" style="left:721px;top:378px;color:#000;">K</span>
<span class="dg" style="left:753px;top:378px;color:#000;">1</span><span class="mo" style="left:759px;top:378px;color:#000;">M</span>
<span class="dg" style="left:798px;top:378px;color:#000;">4</span><span class="mo" style="left:804px;top:378px;color:#000;">M</span>
<span class="dg" style="left:843px;top:378px;color:#000;">16</span><span class="mo" style="left:855px;top:378px;color:#000;">M</span>
<span class="dg" style="left:884px;top:378px;color:#000;">64</span><span class="mo" style="left:896px;top:378px;color:#000;">M</span>
<div class="gb" style="left:512px;top:417px;width:416px;height:83px"></div>
<div style="left:518px;top:412px;width:76px;height:12px;background:#f0f0f0"></div>
<span class="mo" style="left:520px;top:412px;color:#000;">Graph colors</span>
<div class="sw" style="left:562px;top:443px;background:#f0f0f0"></div>
<span class="mo" style="left:602px;top:448px;color:#000;">Background</span>
<div class="sw" style="left:562px;top:466px;background:#000"></div>
<span class="mo" style="left:602px;top:471px;color:#000;">Legend</span>
<div class="sw" style="left:781px;top:443px;background:#000"></div>
<span class="mo" style="left:821px;top:448px;color:#000;">Workspace</span>
<div class="sw" style="left:781px;top:466px;background:#6b6b00"></div>
<span class="mo" style="left:821px;top:471px;color:#000;">Grid</span>
<div class="btn2" style="left:787px;top:521px;width:75px;height:21px"></div><span class="cj" style="left:812px;top:527px;color:#000;">确定</span>
<div class="btn2" style="left:868px;top:521px;width:75px;height:21px"></div><span class="cj" style="left:893px;top:527px;color:#000;">取消</span>
<!--COLORDLG-->
<div class="dlg act" style="left:955px;top:237px;width:480px;height:306px"></div>
<div class="dlgbody" style="left:958px;top:262px;width:474px;height:278px"></div>
<span class="cj" style="left:962px;top:247px;color:#16202e;font-weight:bold">颜色</span>
<div class="capbtn red" style="left:1399px;top:242px;width:31px;height:17px"><svg style="left:8px;top:2px" width="13" height="12" viewBox="0 0 13 12"><path d="M2 2 11 9.600M11 2 2 9.600" stroke="#5a2018" stroke-width="4.400"/><path d="M2.300 2.250 10.700 9.350M10.700 2.250 2.300 9.350" stroke="#fff" stroke-width="2.300"/></svg></div>
<span class="cj" style="left:964px;top:270px;color:#000;">基本颜色</span><span class="mo" style="left:1012px;top:268px;color:#000;">(B):</span>
<div class="cs" style="left:968px;top:286px;background:#FF8080"></div>
<div class="cs" style="left:994px;top:286px;background:#FFFF80"></div>
<div class="cs" style="left:1020px;top:286px;background:#80FF80"></div>
<div class="cs" style="left:1046px;top:286px;background:#00FF80"></div>
<div class="cs" style="left:1072px;top:286px;background:#80FFFF"></div>
<div class="cs" style="left:1098px;top:286px;background:#0080FF"></div>
<div class="cs" style="left:1124px;top:286px;background:#FF80C0"></div>
<div class="cs" style="left:1150px;top:286px;background:#FF80FF"></div>
<div class="cs" style="left:968px;top:307px;background:#FF0000"></div>
<div class="cs" style="left:994px;top:307px;background:#FFFF00"></div>
<div class="cs" style="left:1020px;top:307px;background:#80FF00"></div>
<div class="cs" style="left:1046px;top:307px;background:#00FF40"></div>
<div class="cs" style="left:1072px;top:307px;background:#00FFFF"></div>
<div class="cs" style="left:1098px;top:307px;background:#0080C0"></div>
<div class="cs" style="left:1124px;top:307px;background:#8080C0"></div>
<div class="cs" style="left:1150px;top:307px;background:#FF00FF"></div>
<div class="cs" style="left:968px;top:327px;background:#804040"></div>
<div class="cs" style="left:994px;top:327px;background:#FF8040"></div>
<div class="cs" style="left:1020px;top:327px;background:#00FF00"></div>
<div class="cs" style="left:1046px;top:327px;background:#008080"></div>
<div class="cs" style="left:1072px;top:327px;background:#004080"></div>
<div class="cs" style="left:1098px;top:327px;background:#8080FF"></div>
<div class="cs" style="left:1124px;top:327px;background:#800040"></div>
<div class="cs" style="left:1150px;top:327px;background:#FF0080"></div>
<div class="cs" style="left:968px;top:347px;background:#800000"></div>
<div class="cs" style="left:994px;top:347px;background:#FF8000"></div>
<div class="cs" style="left:1020px;top:347px;background:#008000"></div>
<div class="cs" style="left:1046px;top:347px;background:#008040"></div>
<div class="cs" style="left:1072px;top:347px;background:#0000FF"></div>
<div class="cs" style="left:1098px;top:347px;background:#0000A0"></div>
<div class="cs" style="left:1124px;top:347px;background:#800080"></div>
<div class="cs" style="left:1150px;top:347px;background:#8000FF"></div>
<div class="cs" style="left:968px;top:367px;background:#400000"></div>
<div class="cs" style="left:994px;top:367px;background:#804000"></div>
<div class="cs" style="left:1020px;top:367px;background:#004000"></div>
<div class="cs" style="left:1046px;top:367px;background:#004040"></div>
<div class="cs" style="left:1072px;top:367px;background:#000080"></div>
<div class="cs" style="left:1098px;top:367px;background:#000040"></div>
<div class="cs" style="left:1124px;top:367px;background:#400040"></div>
<div class="cs" style="left:1150px;top:367px;background:#400080"></div>
<div class="cs" style="left:968px;top:387px;background:#000000"></div>
<div class="cs" style="left:994px;top:387px;background:#808000"></div>
<div class="cs" style="left:1020px;top:387px;background:#808040"></div>
<div class="cs" style="left:1046px;top:387px;background:#808080"></div>
<div class="cs" style="left:1072px;top:387px;background:#408080"></div>
<div class="cs" style="left:1098px;top:387px;background:#C0C0C0"></div>
<div class="cs" style="left:1124px;top:387px;background:#400040"></div>
<div class="cs" style="left:1150px;top:387px;background:#FFFFFF"></div>
<div style="left:965px;top:303px;width:24px;height:20px;border:1px dotted #000"></div><div style="left:967px;top:305px;width:20px;height:16px;border:1px solid #000"></div>
<span class="cj" style="left:964px;top:423px;color:#000;">自定义颜色</span><span class="mo" style="left:1024px;top:421px;color:#000;">(C):</span>
<div class="cs" style="left:968px;top:440px;background:#fff"></div>
<div class="cs" style="left:994px;top:440px;background:#fff"></div>
<div class="cs" style="left:1020px;top:440px;background:#fff"></div>
<div class="cs" style="left:1046px;top:440px;background:#fff"></div>
<div class="cs" style="left:1072px;top:440px;background:#fff"></div>
<div class="cs" style="left:1098px;top:440px;background:#fff"></div>
<div class="cs" style="left:1124px;top:440px;background:#fff"></div>
<div class="cs" style="left:1150px;top:440px;background:#fff"></div>
<div class="cs" style="left:968px;top:460px;background:#fff"></div>
<div class="cs" style="left:994px;top:460px;background:#fff"></div>
<div class="cs" style="left:1020px;top:460px;background:#fff"></div>
<div class="cs" style="left:1046px;top:460px;background:#fff"></div>
<div class="cs" style="left:1072px;top:460px;background:#fff"></div>
<div class="cs" style="left:1098px;top:460px;background:#fff"></div>
<div class="cs" style="left:1124px;top:460px;background:#fff"></div>
<div class="cs" style="left:1150px;top:460px;background:#fff"></div>
<div class="btn2" style="left:964px;top:487px;width:201px;height:20px"></div><span class="cj" style="left:1004px;top:493px;color:#a0a0a0;">规定自定义颜色</span><span class="mo" style="left:1088px;top:491px;color:#a0a0a0;">(D) &gt;&gt;</span>
<div class="btn2 def" style="left:964px;top:511px;width:66px;height:21px"></div><span class="cj" style="left:985px;top:517px;color:#000;">确定</span>
<div class="btn2" style="left:1032px;top:511px;width:66px;height:21px"></div><span class="cj" style="left:1053px;top:517px;color:#000;">取消</span>
<div style="left:1186px;top:268px;width:199px;height:173px;background:linear-gradient(to bottom,rgba(128,128,128,0),#808080),linear-gradient(to right,#f00,#ff0 16.670%,#0f0 33.330%,#0ff 50%,#00f 66.670%,#f0f 83.330%,#f00)"></div>
<div style="left:1187px;top:269px;width:3px;height:3px;background:#000"></div><div style="left:1192px;top:268px;width:5px;height:2px;background:#000"></div><div style="left:1186px;top:274px;width:2px;height:5px;background:#000"></div>
<div style="left:1401px;top:267px;width:23px;height:174px;background:linear-gradient(#fff,#f00 50%,#000);border-top:1px solid #8a8a8a;border-left:1px solid #8a8a8a"></div>
<svg style="left:1426px;top:349px" width="7" height="12" viewBox="0 0 7 12"><path d="M7 0v12L0 6Z" fill="#000"/></svg>
<div style="left:1186px;top:448px;width:60px;height:37px;background:#f00"></div>
<span class="cj" style="left:1186px;top:492px;color:#000;">颜色</span><span class="mo" style="left:1210px;top:490px;color:#000;">|</span><span class="cj" style="left:1216px;top:492px;color:#000;">纯色</span><span class="mo" style="left:1240px;top:490px;color:#000;">(O)</span>
<span class="cj" style="left:1277px;top:453px;color:#000;">色调</span><span class="mo" style="left:1301px;top:451px;color:#000;">(E):</span><div class="inp2" style="left:1331px;top:449px;width:25px;height:16px"></div><span class="dg" style="left:1333px;top:451px;color:#000;">0</span>
<span class="cj" style="left:1265px;top:474px;color:#000;">饱和度</span><span class="mo" style="left:1301px;top:472px;color:#000;">(S):</span><div class="inp2" style="left:1331px;top:470px;width:25px;height:16px"></div><span class="dg" style="left:1333px;top:472px;color:#000;">240</span>
<span class="cj" style="left:1277px;top:495px;color:#000;">亮度</span><span class="mo" style="left:1301px;top:493px;color:#000;">(L):</span><div class="inp2" style="left:1331px;top:491px;width:25px;height:16px"></div><span class="dg" style="left:1333px;top:493px;color:#000;">120</span>
<span class="cj" style="left:1359px;top:453px;color:#000;">红</span><span class="mo" style="left:1371px;top:451px;color:#000;">(R):</span><div class="inp2" style="left:1400px;top:449px;width:25px;height:16px"></div><span class="dg" style="left:1402px;top:451px;color:#000;">255</span>
<span class="cj" style="left:1359px;top:474px;color:#000;">绿</span><span class="mo" style="left:1371px;top:472px;color:#000;">(G):</span><div class="inp2" style="left:1400px;top:470px;width:25px;height:16px"></div><span class="dg" style="left:1402px;top:472px;color:#000;">0</span>
<span class="cj" style="left:1359px;top:495px;color:#000;">蓝</span><span class="mo" style="left:1371px;top:493px;color:#000;">(U):</span><div class="inp2" style="left:1400px;top:491px;width:25px;height:16px"></div><span class="dg" style="left:1402px;top:493px;color:#000;">0</span>
<div class="btn2" style="left:1186px;top:511px;width:240px;height:21px"></div><span class="cj" style="left:1249px;top:517px;color:#000;">添加到自定义颜色</span><span class="mo" style="left:1345px;top:515px;color:#000;">(A)</span>
<!--ARROW-->
<svg style="left:0;top:0;filter:drop-shadow(1px 2px 1.500px rgba(0,0,0,.4))" width="1440" height="760" viewBox="0 0 1440 760"><polygon points="583.9,478.1 1083.2,400.5 1078.2,397.5 1105.3,399.3 1082.0,409.1 1083.9,404.7 584.1,479.9" fill="#ee1111" stroke="#d80f0f" stroke-width=".6" stroke-linejoin="round"/></svg>
<!--WATERMARK-->
<svg style="left:0;top:8px;opacity:.8" width="70" height="80" viewBox="0 8 70 80">
<path d="M10 55C22 60 40 56 50 47 55 43 59 39 61.500 34 62 42 58 50 52 55L47.500 58.500 46 63 38.500 62 38 59C35 60 33 60.500 30 60.500L29 65 20 63 19 59.500C15 58.500 12 57 10 55Z" fill="#f5a03a"/>
<ellipse cx="31" cy="31" rx="27" ry="20.500" transform="rotate(-15 31 31)" fill="#3a93d9"/>
<ellipse cx="34.500" cy="38.500" rx="25.500" ry="14" transform="rotate(-18 34.500 38.500)" fill="none" stroke="#f2f7fc" stroke-width="2.600"/>
<path d="M15 38 27 28.500l3 2.500v-5l6-1.500V48H18v-8h-3Z" fill="#f4f8fc"/>
<path d="M21.500 39 27 34.500V46h-5.500Z" fill="#3a93d9"/>
<path d="M38 23h7c8 0 12 5 12 11.500S53 47 45 47h-7Z" fill="#f4f8fc"/>
<path d="M41.500 26h4c5 0 8 4 8 8.500s-3 9-8 9h-4Z" fill="#338cd4"/>
</svg>
<span style="left:66px;top:10.500px;font-family:'Noto Serif CJK SC','Noto Sans CJK SC',serif;font-weight:900;font-size:26.700px;line-height:36px;color:#3b97e3;opacity:.9;-webkit-text-stroke:.4px #3b97e3;text-shadow:0 0 2px #fff">河东软件园</span>
<span style="left:67px;top:44px;font-family:'Liberation Serif',serif;font-weight:bold;font-size:20px;line-height:24px;color:#5db661;opacity:.92;letter-spacing:.05px;text-shadow:0 0 2px #fff">www.pc0359.cn</span>
<svg style="left:10px;top:10px;opacity:.8" width="17" height="17" viewBox="0 0 16 16"><path d="M8 .5 15.5 8 8 15.5 .5 8Z" fill="#0b7a12"/><path d="M8 2.2 13.8 8 8 13.8 2.2 8Z" fill="#2ee53a" stroke="#064d0a" stroke-width=".8" stroke-dasharray="1.2 .8"/><path d="M3.8 7.2h4.4V5.2L12.4 8 8.2 10.8V8.8H3.8Z" fill="#000"/></svg><!--TITLEICON-->
</body></html>
